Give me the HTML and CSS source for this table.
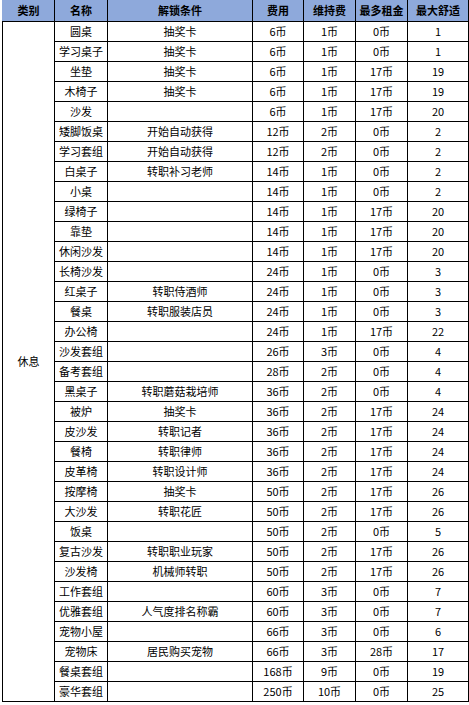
FILE: index.html
```html
<!DOCTYPE html>
<html lang="zh-CN">
<head>
<meta charset="utf-8">
<title>家具一览</title>
<link rel="stylesheet" href="styles.css">
</head>
<body>
<table class="sheet">
  <colgroup>
    <col class="c-cat"><col class="c-name"><col class="c-cond"><col class="c-cost"><col class="c-keep"><col class="c-rent"><col class="c-comf">
  </colgroup>
  <thead>
    <tr class="head">
      <th class="first">类别</th><th>名称</th><th>解锁条件</th><th>费用</th><th>维持费</th><th>最多租金</th><th>最大舒适</th>
    </tr>
  </thead>
  <tbody>
    <tr><td class="cat" rowspan="34">休息</td><td>圆桌</td><td>抽奖卡</td><td>6币</td><td>1币</td><td>0币</td><td>1</td></tr>
    <tr><td>学习桌子</td><td>抽奖卡</td><td>6币</td><td>1币</td><td>0币</td><td>1</td></tr>
    <tr><td>坐垫</td><td>抽奖卡</td><td>6币</td><td>1币</td><td>17币</td><td>19</td></tr>
    <tr><td>木椅子</td><td>抽奖卡</td><td>6币</td><td>1币</td><td>17币</td><td>19</td></tr>
    <tr><td>沙发</td><td></td><td>6币</td><td>1币</td><td>17币</td><td>20</td></tr>
    <tr><td>矮脚饭桌</td><td>开始自动获得</td><td>12币</td><td>2币</td><td>0币</td><td>2</td></tr>
    <tr><td>学习套组</td><td>开始自动获得</td><td>12币</td><td>2币</td><td>0币</td><td>2</td></tr>
    <tr><td>白桌子</td><td>转职补习老师</td><td>14币</td><td>1币</td><td>0币</td><td>2</td></tr>
    <tr><td>小桌</td><td></td><td>14币</td><td>1币</td><td>0币</td><td>2</td></tr>
    <tr><td>绿椅子</td><td></td><td>14币</td><td>1币</td><td>17币</td><td>20</td></tr>
    <tr><td>靠垫</td><td></td><td>14币</td><td>1币</td><td>17币</td><td>20</td></tr>
    <tr><td>休闲沙发</td><td></td><td>14币</td><td>1币</td><td>17币</td><td>20</td></tr>
    <tr><td>长椅沙发</td><td></td><td>24币</td><td>1币</td><td>0币</td><td>3</td></tr>
    <tr><td>红桌子</td><td>转职侍酒师</td><td>24币</td><td>1币</td><td>0币</td><td>3</td></tr>
    <tr><td>餐桌</td><td>转职服装店员</td><td>24币</td><td>1币</td><td>0币</td><td>3</td></tr>
    <tr><td>办公椅</td><td></td><td>24币</td><td>1币</td><td>17币</td><td>22</td></tr>
    <tr><td>沙发套组</td><td></td><td>26币</td><td>3币</td><td>0币</td><td>4</td></tr>
    <tr><td>备考套组</td><td></td><td>28币</td><td>2币</td><td>0币</td><td>4</td></tr>
    <tr><td>黑桌子</td><td>转职蘑菇栽培师</td><td>36币</td><td>2币</td><td>0币</td><td>4</td></tr>
    <tr><td>被炉</td><td>抽奖卡</td><td>36币</td><td>2币</td><td>17币</td><td>24</td></tr>
    <tr><td>皮沙发</td><td>转职记者</td><td>36币</td><td>2币</td><td>17币</td><td>24</td></tr>
    <tr><td>餐椅</td><td>转职律师</td><td>36币</td><td>2币</td><td>17币</td><td>24</td></tr>
    <tr><td>皮革椅</td><td>转职设计师</td><td>36币</td><td>2币</td><td>17币</td><td>24</td></tr>
    <tr><td>按摩椅</td><td>抽奖卡</td><td>50币</td><td>2币</td><td>17币</td><td>26</td></tr>
    <tr><td>大沙发</td><td>转职花匠</td><td>50币</td><td>2币</td><td>17币</td><td>26</td></tr>
    <tr><td>饭桌</td><td></td><td>50币</td><td>2币</td><td>0币</td><td>5</td></tr>
    <tr><td>复古沙发</td><td>转职职业玩家</td><td>50币</td><td>2币</td><td>17币</td><td>26</td></tr>
    <tr><td>沙发椅</td><td>机械师转职</td><td>50币</td><td>2币</td><td>17币</td><td>26</td></tr>
    <tr><td>工作套组</td><td></td><td>60币</td><td>3币</td><td>0币</td><td>7</td></tr>
    <tr><td>优雅套组</td><td>人气度排名称霸</td><td>60币</td><td>3币</td><td>0币</td><td>7</td></tr>
    <tr><td>宠物小屋</td><td></td><td>66币</td><td>3币</td><td>0币</td><td>6</td></tr>
    <tr><td>宠物床</td><td>居民购买宠物</td><td>66币</td><td>3币</td><td>28币</td><td>17</td></tr>
    <tr><td>餐桌套组</td><td></td><td>168币</td><td>9币</td><td>0币</td><td>19</td></tr>
    <tr><td>豪华套组</td><td></td><td>250币</td><td>10币</td><td>0币</td><td>25</td></tr>
  </tbody>
</table>
</body>
</html>
```

FILE: styles.css
```css
html, body {
  margin: 0;
  padding: 0;
  background: #ffffff;
}

body {
  font-family: "Noto Sans CJK SC", "Noto Sans", sans-serif;
  color: #000000;
}

.sheet {
  margin-left: 2px;
  width: 466px;
  border-collapse: collapse;
  table-layout: fixed;
}

.c-cat { width: 52px; }
.c-name { width: 53px; }
.c-cond { width: 145px; }
.c-cost { width: 51px; }
.c-keep { width: 52px; }
.c-rent { width: 52px; }
.c-comf { width: 61px; }

.sheet th,
.sheet td {
  padding: 0;
  text-align: center;
  vertical-align: middle;
  white-space: nowrap;
  overflow: hidden;
  line-height: 19px;
}

.head th {
  height: 21px;
  background: #8ea9db;
  font-size: 11px;
  font-weight: bold;
  border-left: 1px solid #000000;
  border-right: 1px solid #000000;
  border-bottom: 1px solid #000000;
}

.head th.first {
  border-left-color: #8ea9db;
}

.sheet td {
  height: 19px;
  font-size: 11px;
  border: 1px solid #000000;
}
```
